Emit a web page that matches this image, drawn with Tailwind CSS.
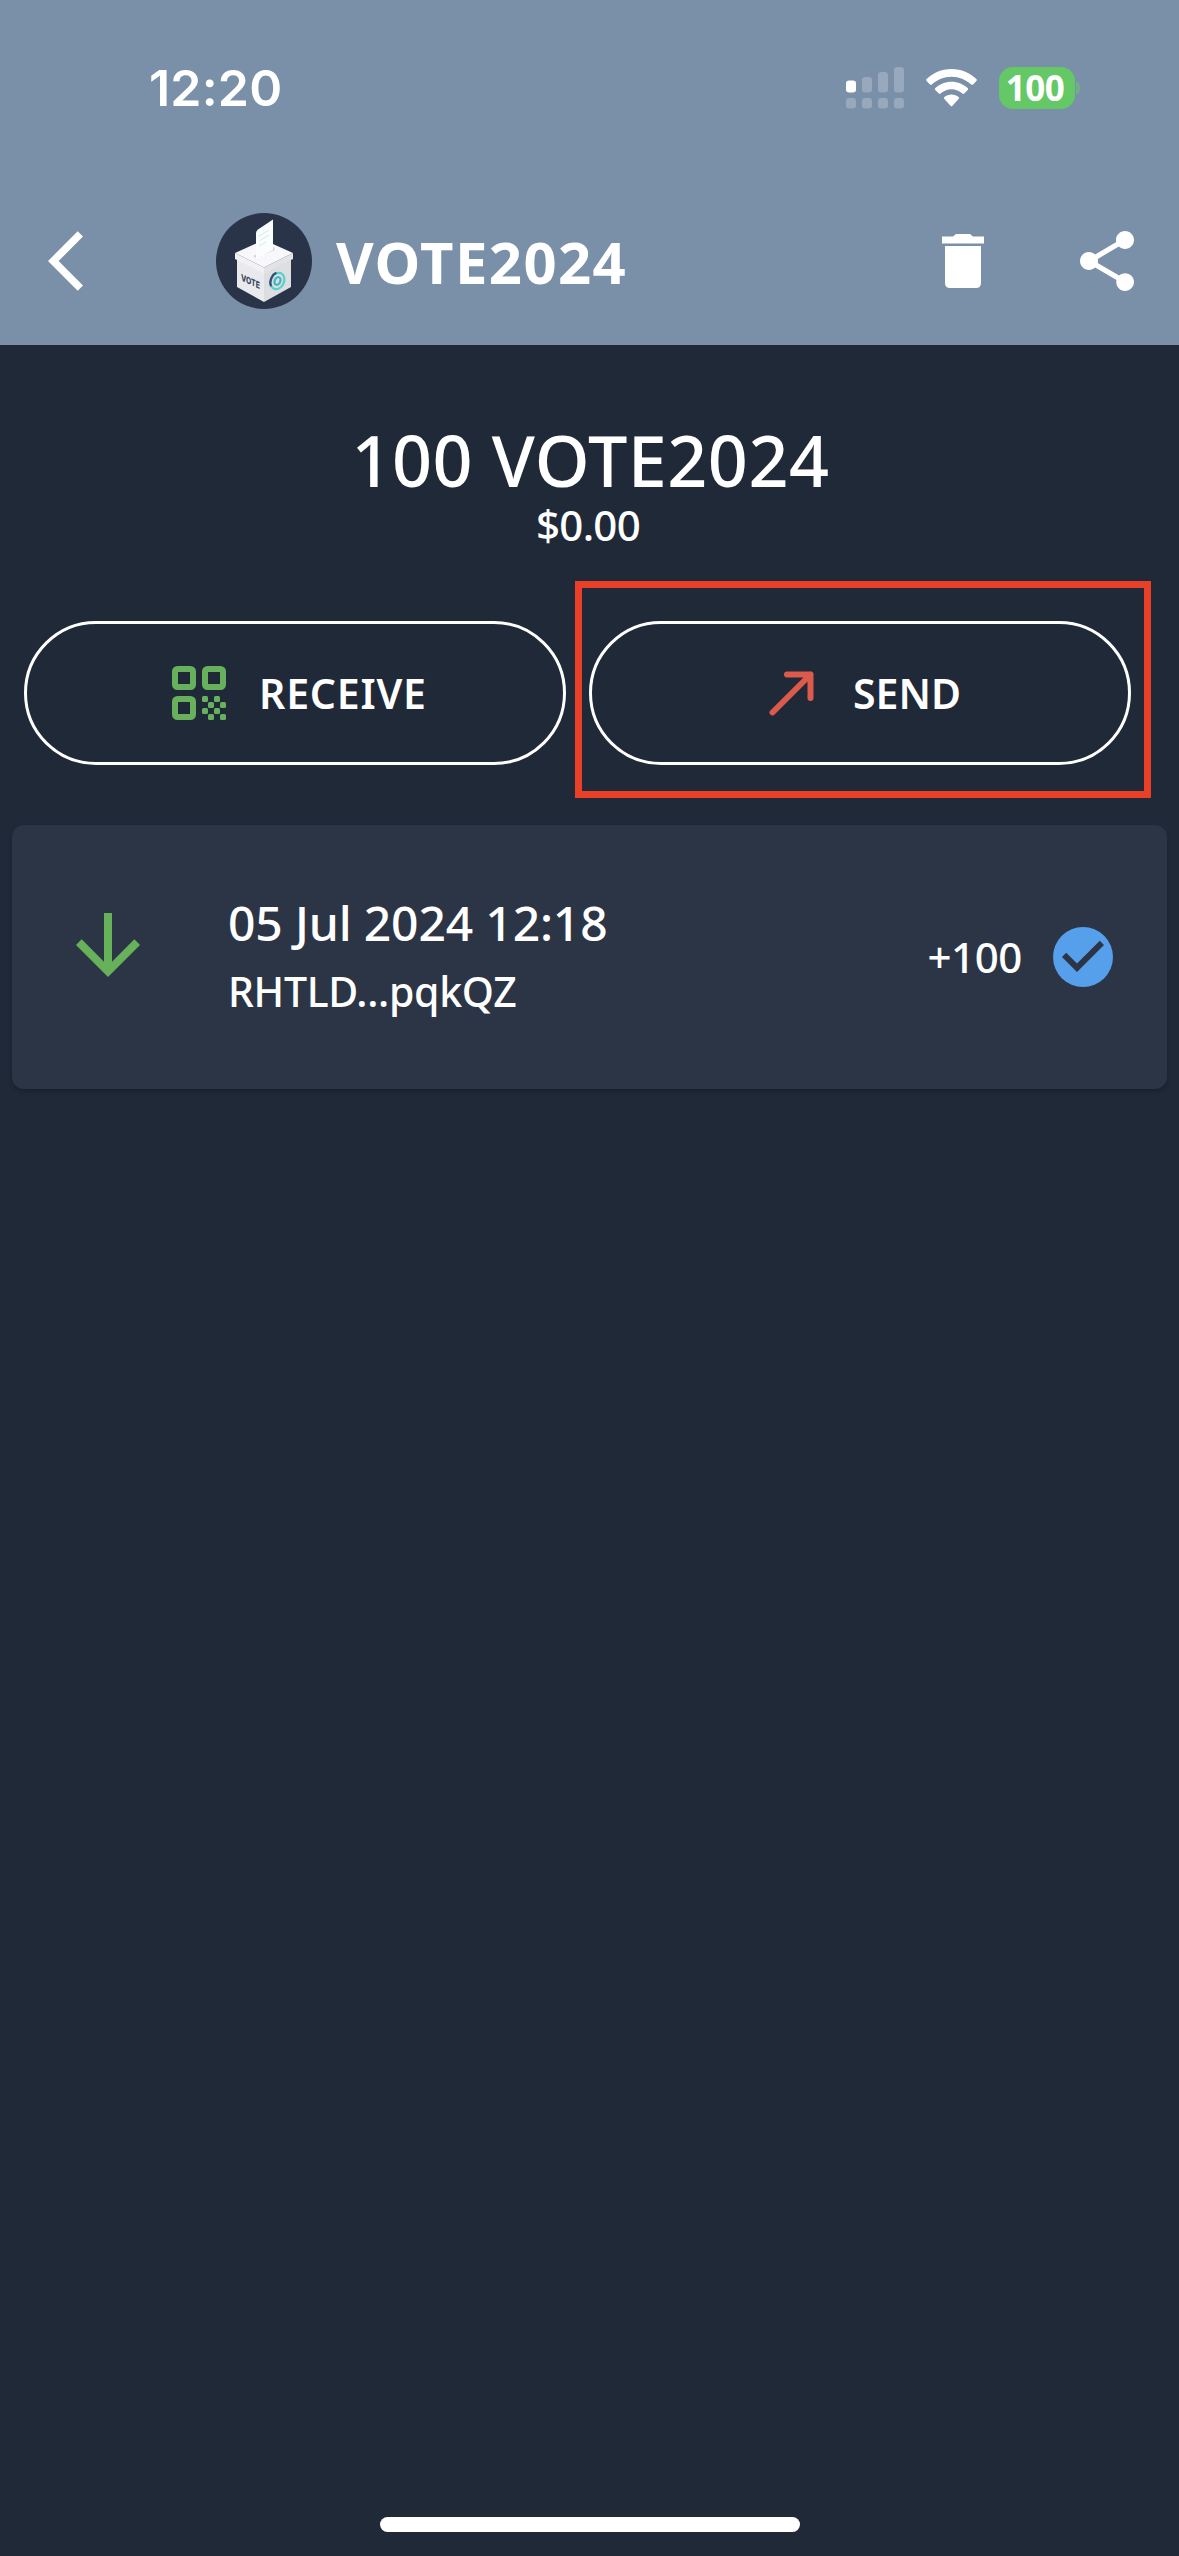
<!DOCTYPE html>
<html lang="en">
<head>
<meta charset="utf-8">
<title>VOTE2024</title>
<script src="https://cdn.jsdelivr.net/npm/@tailwindcss/browser@4"></script>
</head>
<body class="bg-[#202938]">
<div class="flex h-[2556px] w-[1179px] flex-col overflow-hidden bg-[#202938] font-['Noto_Sans',sans-serif] text-white">
  <header class="h-[345px] shrink-0 bg-[#7a8fa8]">
    <!-- status bar -->
    <div class="flex h-[176px] items-center pr-[99px] pl-[149px]">
      <span class="font-['Inter',sans-serif] text-[50px] leading-none font-semibold tracking-[0.2px]">12:20</span>
      <svg class="ml-auto" width="58" height="42" viewBox="0 0 58 42">
        <rect x="0" y="13.500" width="10" height="12" rx="3" fill="#fff"/>
        <g fill="#98a8bd"><rect x="16" y="10" width="10" height="15.500" rx="3"/><rect x="32" y="5" width="10" height="20.500" rx="3"/><rect x="48" y="0" width="10" height="25.500" rx="3"/>
        <rect x="0" y="31" width="10" height="10.500" rx="3"/><rect x="16" y="31" width="10" height="10.500" rx="3"/><rect x="32" y="31" width="10" height="10.500" rx="3"/><rect x="48" y="31" width="10" height="10.500" rx="3"/></g>
      </svg>
      <svg class="ml-[22px]" width="51" height="38" viewBox="0 0 51 38" fill="#fff">
        <path d="M25.500 0C15.500 0 6.700 4 .6 10.100q-.9.900 0 1.800l3.300 3.500q.9.900 1.900 0C11.200 10.600 18 7.700 25.500 7.700s14.300 2.900 19.700 7.700q1 .9 1.900 0l3.300-3.500q.9-.9 0-1.800C44.300 4 35.500 0 25.500 0z"/>
        <path d="M25.500 12.800c-6.400 0-12 2.500-16.200 6.300q-1 .9 0 1.900l3.500 3.500q.8.800 1.800 0c3-2.500 6.700-4.200 10.900-4.200s7.900 1.700 10.900 4.200q1 .8 1.800 0l3.500-3.500q1-1 0-1.900c-4.200-3.800-9.800-6.300-16.200-6.300z"/>
        <path d="M25.500 25.500c-2.800 0-5.200 1-7.100 2.500q-1 .9 0 1.900l6.100 6.900q1 1 2 0l6.100-6.900q1-1 0-1.900c-1.900-1.500-4.300-2.500-7.100-2.500z"/>
      </svg>
      <div class="ml-[22px] flex h-[42px] w-[76px] items-center justify-center rounded-[14px] bg-[#64c866] pr-[4px] pb-[2px] text-[35px] leading-none font-bold tracking-[-0.5px]">100</div>
      <div class="ml-px h-3 w-[4px] rounded-r-full bg-[#6fae88]"></div>
    </div>
    <!-- navigation bar -->
    <div class="flex h-[169px] items-center pr-[45px] pl-12">
      <svg width="35" height="60" viewBox="0 2.100 11.670 19.800" fill="#fff"><path d="M11.670 3.870 9.900 2.100 0 12l9.900 9.900 1.770-1.770L3.540 12z"/></svg>
      <svg class="ml-[133px]" width="96" height="96" viewBox="0 0 96 96">
        <circle cx="48" cy="48" r="48" fill="#2a3448"/>
        <path d="M21 44 48 58v31L21 74z" fill="#e9eaed"/>
        <path d="M75 44 48 58v31L75 74z" fill="#dddee2"/>
        <path d="M19 40 48 54.500v6L19 46z" fill="#f2f2f4"/>
        <path d="M77 40 48 54.500v6L77 46z" fill="#e3e3e7"/>
        <path d="M19 40 48 27l29 13-29 14.500z" fill="#f8f8fa"/>
        <path d="m37 43 21-9 1 3-19 8z" fill="#d6d6dc"/>
        <path d="M40 46V20q0-2 2-3.500L57 6.500V37z" fill="#f9fdfd"/>
        <path d="m43 23 10-6M43 28l10-6M43 33l7-4" stroke="#d5e9e9" stroke-width="1"/>
        <text transform="matrix(1 .45 0 1 25 67.500)" font-family="Inter, sans-serif" font-size="9.500" font-weight="800" textLength="19" lengthAdjust="spacingAndGlyphs" fill="#3e4861">VOTE</text>
        <g fill="none" transform="rotate(25 61.500 68)">
          <ellipse cx="61.500" cy="68" rx="6.500" ry="8.500" stroke="#58d0cb" stroke-width="2.200"/>
          <path d="M58 75.500c-4-3-4.500-11-1-14.500" stroke="#35506f" stroke-width="2.200"/>
          <ellipse cx="61.500" cy="68" rx="2.800" ry="4" stroke="#3fb9bd" stroke-width="2.200"/>
        </g>
      </svg>
      <h1 class="mt-[3px] ml-[24px] text-[58px] leading-none font-bold tracking-[1.4px]">VOTE2024</h1>
      <svg class="ml-auto" width="42" height="54" viewBox="0 0 42 54" fill="#fff"><path d="M0 2.500h11L14 0h14l3 2.500h11V9.500H0zM3 12h36v37q0 5-5 5H8q-5 0-5-5z"/></svg>
      <svg class="ml-24" width="54" height="60" viewBox="3 2 18 20" fill="#fff"><path d="M18 16.080c-.76 0-1.440.3-1.960.77L8.910 12.700c.05-.23.090-.46.090-.7s-.04-.47-.09-.7l7.050-4.110c.54.5 1.250.81 2.040.81 1.660 0 3-1.340 3-3s-1.340-3-3-3-3 1.340-3 3c0 .24.040.47.090.7L8.040 9.810C7.500 9.310 6.790 9 6 9c-1.660 0-3 1.340-3 3s1.340 3 3 3c.79 0 1.500-.31 2.040-.81l7.120 4.160c-.05.21-.08.430-.08.650 0 1.610 1.310 3 2.920 3s3-1.390 3-3-1.340-2.920-3-2.920z"/></svg>
    </div>
  </header>

  <section class="flex flex-col items-center pt-[75px]">
    <div class="h-20 pl-[2px] text-[70px] leading-[80px] font-medium tracking-[0.5px]">100 VOTE2024</div>
    <div class="h-[50px] pr-[3px] text-[42px] leading-[50px] font-medium tracking-[-0.7px]">$0.00</div>
  </section>

  <div class="mt-[71px] flex gap-[23px] px-6">
    <button class="flex h-36 w-[542px] items-center rounded-full border-3 border-white pl-[145px]">
      <svg width="54" height="54" viewBox="0 0 54 54" fill="#68b15c">
        <g fill="none" stroke="#68b15c" stroke-width="6"><rect x="3" y="3" width="18" height="18" rx="2.500"/><rect x="33" y="3" width="18" height="18" rx="2.500"/><rect x="3" y="33" width="18" height="18" rx="2.500"/></g>
        <rect x="30" y="30" width="6" height="6" rx="1.500"/><rect x="42" y="30" width="6" height="6" rx="1.500"/><rect x="36" y="36" width="6" height="6" rx="1.500"/><rect x="48" y="36" width="6" height="6" rx="1.500"/>
        <rect x="30" y="42" width="6" height="6" rx="1.500"/><rect x="42" y="42" width="6" height="6" rx="1.500"/><rect x="36" y="48" width="6" height="6" rx="1.500"/><rect x="48" y="48" width="6" height="6" rx="1.500"/>
      </svg>
      <span class="ml-[33px] text-[41px] leading-none font-semibold tracking-[0.8px]">RECEIVE</span>
    </button>
    <button class="relative flex h-36 w-[542px] items-center rounded-full border-3 border-white pl-[177px]">
      <svg width="45" height="45" viewBox="0 0 45 45" fill="none" stroke="#dc5a4b" stroke-width="6" stroke-linecap="round" stroke-linejoin="round"><path d="M3.500 41.500 41.500 3.500M18 3.500h23.500V27"/></svg>
      <span class="ml-[39px] text-[41px] leading-none font-semibold">SEND</span>
      <span class="absolute -top-[43px] -left-[17px] h-[217px] w-[576px] border-7 border-[#ea4028]"></span>
    </button>
  </div>

  <article class="mx-3 mt-[60px] flex h-[264px] items-center rounded-xl bg-[#2c3546] pr-[54px] pl-16 shadow-[0_3px_4px_rgba(0,0,0,0.2)]">
    <svg class="mb-6" width="64" height="64" viewBox="4 4 16 16" fill="#66b15a"><path d="m20 12-1.410-1.410L13 16.170V4h-2v12.170l-5.580-5.590L4 12l8 8 8-8z"/></svg>
    <div class="ml-[88px]">
      <div class="text-[48px] leading-[68px] font-medium tracking-[-0.15px]">05 Jul 2024 12:18</div>
      <div class="text-[41px] leading-[68px] font-medium tracking-[-0.3px]">RHTLD...pqkQZ</div>
    </div>
    <div class="ml-auto text-[42px] leading-none font-medium tracking-[-0.4px]">+100</div>
    <svg class="ml-[31px]" width="60" height="60" viewBox="2 2 20 20"><circle cx="12" cy="12" r="10" fill="#569fea"/><path d="m10 17-5-5 1.410-1.410L10 14.170l7.590-7.590L19 8z" fill="#2c3546"/></svg>
  </article>

  <div class="mx-auto mt-auto mb-6 h-[15px] w-[420px] rounded-full bg-white"></div>
</div>
</body>
</html>
